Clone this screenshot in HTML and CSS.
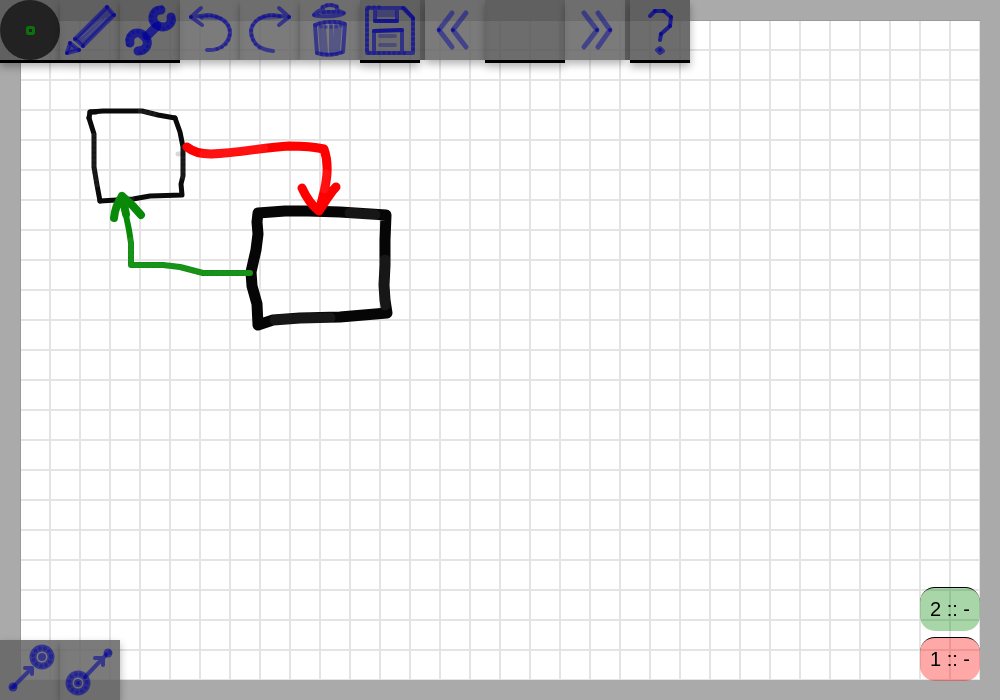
FILE: index.html
```html
<!DOCTYPE html>
<html lang="en">
<head>
<meta charset="utf-8">
<title>Whiteboard</title>
<link rel="stylesheet" href="styles.css">
</head>
<body>
<main class="board">
  <svg class="drawing" viewBox="0 0 420 340" width="420" height="340" aria-hidden="true">
    <g class="thin">
      <path class="ink" d="M89 118L90 112L103 111L142 111L150 113L158 115L175 118L180 132L183 147L183 176L181 184L182 195L150 196L133 199L100 201L97 185L94 167L94 134L89 118"/>
      <path class="dots" d="M183 147V182M132 199L125 201M97 185L94 167L94 134M140 111L158 115"/>
      <path class="ink" d="M90 112H96M89 118h0M175 118h0M100 201h0"/>
      <path class="smudge" d="M178 154H182"/>
    </g>
    <g class="thick">
      <path class="ink" d="M258 213L285 211L308 211L340 212L386 215L385 240L385 265L384 285L385 300L387 313L340 317L300 318L273 320L258 325L257 304L252 286L251 272L256 250L258 234L257 222L258 213"/>
      <path class="dots" d="M350 213L378 215M385 260L384 285L385 305M330 318L310 318L273 320"/>
    </g>
    <g class="red">
      <path class="ink" d="M187 147C193 152 200 154 211 154C240 153 265 147 289 146C305 146 315 147 324 149C330 166 327 184 319 211M302 188C306 197 310 204 319 211C324 204 329 194 336 187"/>
      <path class="dots" d="M204 154C225 154 240 151 265 148M326 174L324 192"/>
    </g>
    <g class="green">
      <path class="ink" d="M250 273H203L180 267L163 265H131V243L129 230L122 196"/>
      <path class="dots" d="M250 273H203L180 267L163 265H131V235"/>
      <path class="head" d="M114 218C115 209 117 203 122 196L133 206L141 215M122 196L126 214"/>
    </g>
  </svg>
</main>

<nav class="toolbar">
  <button class="tool active" type="button">
    <svg viewBox="0 0 60 60"><circle cx="30" cy="30" r="30" fill="#222"/><rect x="27.500" y="27.500" width="6" height="6" rx="1" fill="none" stroke="#0c700c" stroke-width="3"/></svg>
  </button>
  <button class="tool active" type="button">
    <svg viewBox="0 0 60 60">
      <path class="shade" d="M15 39L47 7L54 15L23 46ZM10 43L19 50L7 53Z"/>
      <path class="line" d="M15 39L47 7L54 15L23 46ZM10 43L7 53L19 50Z"/>
      <path class="streak" d="M21 37L42 19M25 38L46 18"/>
      <path class="dot" d="M15 39h0M23 46h0M47 7h0M54 15h0M10 43h0M19 50h0M7 53h0"/>
    </svg>
  </button>
  <button class="tool active" type="button">
    <svg viewBox="0 0 60 60">
      <path class="line wide" d="M41 10C31 10 30 23 39 26C46 29 53 24 51 17M10 43C8 33 19 30 24 36C31 43 26 51 18 51"/>
      <path class="line wide" d="M27 36L37 26"/>
      <path class="specks" d="M42 7C29 9 28 23 38 28C46 31 54 24 53 15M8 45C4 33 18 28 25 35C32 43 27 53 16 54"/>
    </svg>
  </button>
  <button class="tool" type="button">
    <svg viewBox="0 0 60 60">
      <path class="line" d="M21 8L11 17L22 25M11 17L28 15C41 16 50 23 50 33C49 44 39 51 27 50"/>
      <path class="line faint" d="M20 17L38 18"/>
      <path class="specks" d="M22 18L28 15C41 16 50 23 50 33C49 44 43 48 37 49"/><path class="dot" d="M11 17h0"/>
    </svg>
  </button>
  <button class="tool" type="button">
    <svg viewBox="0 0 60 60">
      <path class="line" d="M39 8L49 17L39 25M49 17L32 15C18 16 11 24 11 32C12 43 20 50 33 51"/>
      <path class="line faint" d="M22 18L40 17"/>
      <path class="specks" d="M39 16L31 15C18 16 11 24 11 32C12 43 18 47 21 49"/><path class="dot" d="M49 17h0"/>
    </svg>
  </button>
  <button class="tool" type="button">
    <svg viewBox="0 0 60 60">
      <path class="line" d="M14 15C17 11 20 10 23 10V7Q30 3 37 7V10L44 13C38 17 20 17 14 15ZM22 12H37M15 25C22 21 38 21 45 24L43 52Q30 57 17 53Z"/>
      <path class="line faint" d="M20 26L22 52M24 25L26 53M31 25V53M36 25L34 53M40 25L38 52"/>
      <path class="specks" d="M14 15C24 11 36 11 44 13M22 7Q30 3 38 7M15 25C22 21 38 21 45 24C38 28 22 28 15 25M17 53Q30 57 43 52"/>
    </svg>
  </button>
  <button class="tool active" type="button">
    <svg viewBox="0 0 60 60">
      <path class="line" d="M7 8H44L53 18V53H7ZM15 9V21H37V9M14 53V31L42 30V53"/>
      <path class="line faint" d="M20 36H35M20 45H35M18 12H34M18 15H34"/>
      <path class="specks" d="M44 53H7V7H20M53 19V53"/>
      <path class="line" d="M15 21H37M43 8L53 18M14 31L42 30"/>
    </svg>
  </button>
  <span class="gap"></span>
  <button class="tool" type="button">
    <svg viewBox="0 0 60 60"><path class="line soft" d="M27 13L14 30L27 47M41 13L28 30L41 47"/><path class="dot" d="M14 30h0M28 30h0"/></svg>
  </button>
  <button class="tool page active" type="button"></button>
  <button class="tool" type="button">
    <svg viewBox="0 0 60 60"><path class="line soft" d="M19 13L32 30L19 47M33 13L45 30L33 47"/><path class="dot" d="M32 30h0M45 30h0"/></svg>
  </button>
  <span class="gap"></span>
  <button class="tool active" type="button">
    <svg viewBox="0 0 60 60">
      <path class="line strong" d="M20 16L25 11L34 11L41 17L40 26L31 34L30 40"/><path class="dot" d="M25 11h0M34 11h0M41 17h0M40 26h0M31 34h0"/>
      <path class="line" d="M27 50L30 48L33 51L30 53Z"/><path class="line" d="M30 50h0"/>
    </svg>
  </button>
</nav>

<nav class="toolbar links">
  <button class="tool" type="button">
    <svg viewBox="0 0 60 60">
      <path class="line" d="M13 47L32 28M25 28H32V34"/>
      <circle class="ring" cx="42" cy="17" r="9"/><circle class="specks" cx="42" cy="17" r="9"/><circle class="line" cx="42" cy="17" r="2"/>
      <path class="knob" d="M13 47h0"/><circle class="specks" cx="13" cy="47" r="2"/>
    </svg>
  </button>
  <button class="tool" type="button">
    <svg viewBox="0 0 60 60">
      <path class="line" d="M25 37L46 15M35 18H43V25"/>
      <circle class="ring" cx="18" cy="43" r="9"/><circle class="specks" cx="18" cy="43" r="9"/><circle class="line" cx="18" cy="43" r="2"/><path class="line" d="M18 43h0"/>
      <path class="knob" d="M48 13h0"/><circle class="specks" cx="48" cy="13" r="2"/>
    </svg>
  </button>
</nav>

<aside class="users">
  <button class="user second" type="button">2 :: -</button>
  <button class="user first" type="button">1 :: -</button>
</aside>
</body>
</html>
```
FILE: styles.css
```css
* { box-sizing: border-box; }
body {
  margin: 0;
  min-height: 100vh;
  display: flex;
  padding: 20px;
  background: #aaa;
  font-family: "Liberation Sans", Arial, sans-serif;
}
.board {
  flex: 1;
  position: relative;
  border: solid #999;
  border-width: 1px 0 0 1px;
  background-color: #fff;
  background-image:
    linear-gradient(90deg, transparent 28px, #e4e4e4 28px),
    linear-gradient(transparent 28px, #e4e4e4 28px);
  background-size: 30px 30px;
}
.drawing {
  position: absolute;
  top: -21px;
  left: -21px;
}
.drawing path {
  fill: none;
  stroke-linecap: round;
  stroke-linejoin: round;
}
.thin { stroke: #0a0a0a; stroke-width: 5px; }
.thick { stroke: #060606; stroke-width: 11px; }
.red { stroke: #f00; stroke-width: 9px; }
.green { stroke: #088a08; stroke-width: 6px; }
.head { stroke-width: 8px; }
.drawing .dots { stroke: rgba(255, 255, 255, 0.07); stroke-dasharray: 0 5; }
.drawing .smudge { stroke: rgba(0, 0, 0, 0.15); }

.toolbar {
  position: fixed;
  top: 0;
  left: 0;
  display: flex;
  align-items: flex-start;
}
.links { top: auto; bottom: 0; }
.tool {
  width: 60px;
  height: 60px;
  padding: 0;
  border: 0;
  background: rgba(100, 100, 100, 0.85);
  box-shadow: 0 4px 8px rgba(0, 0, 0, 0.3);
}
.tool.active {
  height: 63px;
  border-bottom: 3px solid #000;
  background: rgba(83, 83, 83, 0.85);
  background-clip: padding-box;
}
.tool.page { width: 80px; }
.gap { width: 5px; height: 60px; background: rgba(70, 70, 70, 0.85); }
.tool svg { display: block; width: 60px; height: 60px; }
.line, .dot, .specks, .knob, .ring, .streak {
  fill: none;
  stroke: rgba(0, 0, 155, 0.55);
  stroke-width: 4px;
  stroke-linecap: round;
  stroke-linejoin: round;
}
.wide { stroke-width: 9px; stroke: rgba(0, 0, 155, 0.7); }
.soft { stroke-width: 5px; stroke: rgba(0, 0, 155, 0.45); }
.faint { stroke: rgba(0, 0, 155, 0.3); }
.strong { stroke: rgba(0, 0, 150, 0.7); }
.specks { stroke: rgba(0, 0, 155, 0.35); stroke-dasharray: 0 5; }
.dot { stroke: rgba(0, 0, 155, 0.7); }
.knob { stroke-width: 9px; }
.ring { stroke-width: 7px; }
.streak { stroke-width: 1px; stroke: rgba(110, 110, 140, 0.5); }
.shade { fill: rgba(0, 0, 155, 0.4); }

.users {
  position: fixed;
  right: 20px;
  bottom: 19px;
  display: flex;
  flex-direction: column;
  gap: 6px;
}
.user {
  width: 60px;
  height: 44px;
  padding: 0;
  border: 0;
  border-top: 1px solid #000;
  border-radius: 15px;
  color: #000;
  font: 20px "Liberation Sans", Arial, sans-serif;
}
.second { background: rgba(0, 136, 0, 0.34); }
.first { background: rgba(255, 0, 0, 0.34); }
```
